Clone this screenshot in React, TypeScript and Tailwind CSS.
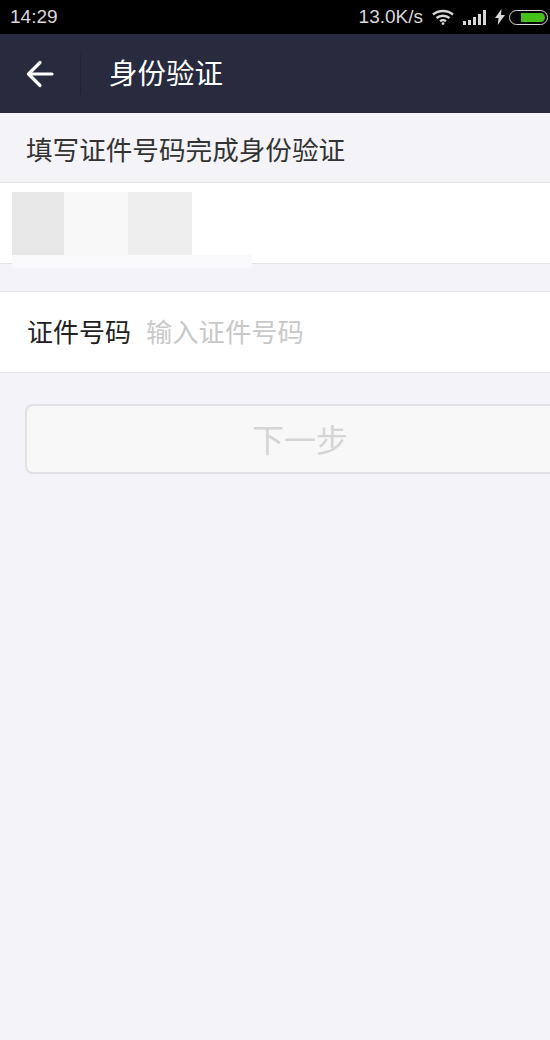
const cjk = "font-['Liberation_Sans','Noto_Sans_CJK_SC',sans-serif]";

const StatusBar = () => (
  <div className="h-[34px] bg-black flex items-center justify-between pl-[10px] pr-[2px] text-[#d8d8d8] text-[19px] font-['Liberation_Sans',sans-serif]">
    <span>14:29</span>
    <div className="flex items-center">
      <span className="ml-[-1px]">13.0K/s</span>
      {/* wifi */}
      <svg className="ml-[9px]" width="22" height="16" viewBox="0 0 22 16" fill="none" stroke="#d8d8d8" strokeWidth="2.4">
        <path d="M1 5.5C6.5 .8 15.5 .8 21 5.5" />
        <path d="M4.5 9C8.2 6 13.8 6 17.5 9" />
        <path d="M8 12.2c1.8-1.3 4.2-1.3 6 0" />
        <circle cx="11" cy="14.6" r="1.4" fill="#d8d8d8" stroke="none" />
      </svg>
      {/* signal */}
      <div className="ml-[9px] flex items-end gap-[2px] h-[15px]">
        <div className="w-[3px] h-[4px] bg-[#d8d8d8]" />
        <div className="w-[3px] h-[5px] bg-[#d8d8d8]" />
        <div className="w-[3px] h-[8px] bg-[#d8d8d8]" />
        <div className="w-[3px] h-[11px] bg-[#d8d8d8]" />
        <div className="w-[3px] h-[15px] bg-[#d8d8d8]" />
      </div>
      {/* charging */}
      <svg className="ml-[9px]" width="10" height="16" viewBox="0 0 10 16" fill="#d8d8d8">
        <path d="M6.5 0 0 9h3.6L2.6 16 10 6H6z" />
      </svg>
      {/* battery */}
      <div className="ml-[4px] w-[39px] h-[15px] rounded-full border border-[#d8d8d8] p-[2px] flex justify-end">
        <div className="w-[24px] h-full rounded-r-full bg-[#45c11a]" />
      </div>
    </div>
  </div>
);

const App = () => {
  return (
    <div className={`w-[550px] h-[1040px] bg-[#f3f3f8] overflow-hidden ${cjk}`}>
      <StatusBar />

      <div className="h-[79px] bg-[#272b3d] flex items-center">
        <div className="w-[80px] flex justify-center">
          <svg width="28" height="28" viewBox="0 0 28 28" fill="none" stroke="#fff" strokeWidth="3.2" strokeLinecap="round" strokeLinejoin="round">
            <path d="M26 14H3" />
            <path d="M14 2.5 2.5 14 14 25.5" />
          </svg>
        </div>
        <div className="w-px h-[40px] bg-[#202334]" />
        <div className="ml-[28px] pt-[2px] text-[28.5px] text-white">身份验证</div>
      </div>

      <div className="h-[70px] flex items-center pt-[9px] pl-[26px] text-[26.6px] text-[#333333] border-b border-[#e3e3e6]">
        填写证件号码完成身份验证
      </div>

      <div className="h-[81px] bg-white border-b border-[#e3e3e6] pt-[9px] pl-[12px]">
        <div className="flex">
          <div className="w-[52px] h-[63px] bg-[#e7e7e7]" />
          <div className="w-[64px] h-[63px] bg-[#f8f8f8]" />
          <div className="w-[64px] h-[63px] bg-[#eeeeee]" />
        </div>
        <div className="w-[240px] h-[13px] bg-[#f9f9fc]" />
      </div>

      <div className="mt-[27px] h-[82px] bg-white border-y border-[#e6e6e9] flex items-center pt-[3px] pl-[27px]">
        <span className="text-[26px] text-[#222222]">证件号码</span>
        <span className="ml-[15px] text-[26.3px] text-[#c9c9c9]">输入证件号码</span>
      </div>

      <div className="mt-[31px] ml-[25px] w-[550px] h-[70px] rounded-l-[8px] bg-[#f8f8f9] border-2 border-r-0 border-[#e1e1e5] flex items-center justify-center pt-[3px] text-[32px] text-[#d5d5d5]">
        <span className="ml-[-2px]">下一步</span>
      </div>
    </div>
  );
};

export default App;
